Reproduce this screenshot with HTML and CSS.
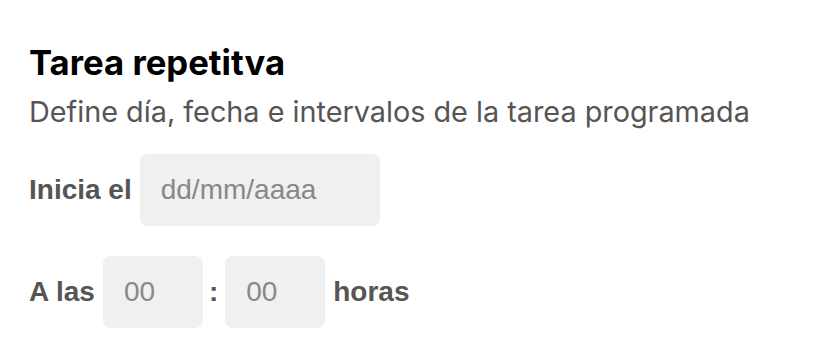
FILE: index.html
```html
<!DOCTYPE html>
<html lang="es">
<head>
  <meta charset="UTF-8">
  <meta name="viewport" content="width=device-width, initial-scale=1.0">
  <title>Tarea repetitiva</title>
  <link rel="stylesheet" href="styles.css">
</head>
<body>
  <div class="panel">
    <h2>Tarea repetitva</h2>
    <p class="subtitle">Define día, fecha e intervalos de la tarea programada</p>

    <div class="row">
      <label for="inicio">Inicia el</label>
      <input id="inicio" class="field date" type="text" placeholder="dd/mm/aaaa">
    </div>

    <div class="row">
      <label for="hora">A las</label>
      <input id="hora" class="field small" type="text" placeholder="00">
      <span class="sep">:</span>
      <input id="minuto" class="field small" type="text" placeholder="00">
      <span class="unit">horas</span>
    </div>
  </div>
</body>
</html>
```

FILE: styles.css
```css
body {
  margin: 0;
  padding: 0;
  background: #fff;
  font-family: "Liberation Sans", Arial, sans-serif;
}

.panel {
  padding: 40px 29px 0;
}

.panel h2 {
  font-family: Inter, sans-serif;
  font-size: 34.7px;
  font-weight: 700;
  color: #000;
  margin: 0;
  line-height: 44px;
}

.subtitle {
  font-family: Inter, sans-serif;
  font-size: 28.8px;
  color: #555;
  margin: 10px 0 24px;
  line-height: 36px;
}

.row {
  display: flex;
  align-items: center;
  gap: 8px;
  margin-bottom: 30px;
}

.row label,
.row .unit,
.row .sep {
  font-size: 28px;
  font-weight: 700;
  color: #555;
}

.field {
  height: 72px;
  box-sizing: border-box;
  border: none;
  border-radius: 8px;
  background: #f0f0f0;
  font-family: "Liberation Sans", Arial, sans-serif;
  font-size: 28px;
  color: #333;
  outline: none;
}

.field::placeholder {
  color: #888;
}

.date {
  width: 240px;
  padding: 0 21px;
}

.small {
  width: 100px;
  padding: 0 21px;
}

.sep {
  margin: 0 -1px 0 -2px;
}
```
